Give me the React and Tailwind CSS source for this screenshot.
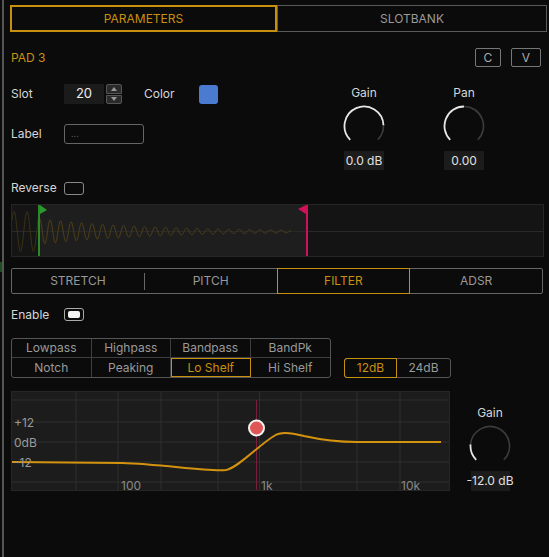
import React from "react";

function arcPath(cx, cy, r, a0, a1) {
  const p = (a) => {
    const t = (a * Math.PI) / 180;
    return `${(cx + r * Math.sin(t)).toFixed(2)} ${(cy - r * Math.cos(t)).toFixed(2)}`;
  };
  const large = a1 - a0 > 180 ? 1 : 0;
  return `M${p(a0)} A${r} ${r} 0 ${large} 1 ${p(a1)}`;
}

function Knob({ angle }) {
  return (
    <svg width="42" height="42" viewBox="0 0 42 42">
      <path d={arcPath(21, 21, 19.5, angle, 135)} fill="none" stroke="#3c3c3c" strokeWidth="1.6" />
      <path d={arcPath(21, 21, 19.5, -135, angle)} fill="none" stroke="#e6e6e6" strokeWidth="1.8" />
    </svg>
  );
}

function KnobColumn({ label, angle, value }) {
  return (
    <div className="flex flex-col items-center w-[42px]">
      <div className="text-[12px] leading-[14px] text-[#d6d6d6]">{label}</div>
      <div className="mt-[5px]">
        <Knob angle={angle} />
      </div>
      <div className="mt-[4px] h-[19px] w-[40px] bg-[#1c1c1c] flex items-center justify-center text-[12px] text-[#e0e0e0] whitespace-nowrap">
        {value}
      </div>
    </div>
  );
}

function wavePath(from, to, fn) {
  let d = "";
  for (let x = from; x <= to; x += 0.5) {
    d += `${x === from ? "M" : "L"}${x} ${fn(x).toFixed(2)} `;
  }
  return d;
}

function Waveform() {
  const pre = wavePath(0, 27, (x) => 26.5 - 20 * Math.sin((x / 13) * Math.PI * 2 + 0.6));
  const main = wavePath(27, 279, (x) => {
    const amp = 13 * Math.exp(-(x - 27) / 110);
    return 26.5 - amp * Math.sin(((x - 27) / 10.5) * Math.PI * 2 + 1.2);
  });
  return (
    <div className="relative w-[533px] h-[53px] border border-[#262626]">
      <svg width="531" height="51" viewBox="0 0 531 51" className="block">
        <rect x="0" y="0" width="27" height="51" fill="#151515" />
        <rect x="27" y="0" width="268" height="51" fill="#1e1e1e" />
        <rect x="295" y="0" width="236" height="51" fill="#141414" />
        <line x1="0" y1="26.5" x2="531" y2="26.5" stroke="#292929" strokeWidth="1" />
        <path d={pre} fill="none" stroke="#3a3116" strokeWidth="1" />
        <path d={main} fill="none" stroke="#4e4018" strokeWidth="1" />
        <line x1="27" y1="0" x2="27" y2="51" stroke="#2a8a2a" strokeWidth="2" />
        <polygon points="28,0 35,5 28,9" fill="#2a9a2a" />
        <line x1="295" y1="0" x2="295" y2="51" stroke="#d0115a" strokeWidth="2" />
        <polygon points="294,0 286,4 294,9" fill="#d0115a" />
      </svg>
    </div>
  );
}

function FilterGraph() {
  const vx = [64, 106, 149, 206, 247.5, 289, 345, 388];
  const hy = [8, 30, 50, 70, 90];
  return (
    <div className="relative w-[439px] h-[100px] bg-[#1c1c1c] border border-[#262626]">
      <svg width="437" height="98" viewBox="0 0 437 98" className="block">
        {vx.map((x) => (
          <line key={x} x1={x} y1="0" x2={x} y2="98" stroke="#2e2e2e" strokeWidth="1" />
        ))}
        {hy.map((y) => (
          <line key={y} x1="0" y1={y} x2="437" y2={y} stroke="#2e2e2e" strokeWidth="1" />
        ))}
        <line x1="244.5" y1="8" x2="244.5" y2="98" stroke="#7a1f3c" strokeWidth="1" />
        <path
          d="M0 70 L110 71 C150 72 195 80 214 78 C226 76 248 52 262 44 C268 40 276 40 292 44 C310 48 325 50 345 50 L429 50"
          fill="none"
          stroke="#d4930f"
          strokeWidth="2"
        />
        <circle cx="244.5" cy="36" r="7.5" fill="#e05555" stroke="#f2f2f2" strokeWidth="2" />
      </svg>
      <span className="absolute left-[2px] top-[22px] text-[12px] text-[#9a9a9a]">+12</span>
      <span className="absolute left-[2px] top-[42px] text-[12px] text-[#9a9a9a]">0dB</span>
      <span className="absolute left-[2px] top-[62px] text-[12px] text-[#9a9a9a]">-12</span>
      <span className="absolute left-[109px] top-[85px] text-[12px] text-[#8a8a8a]">100</span>
      <span className="absolute left-[249px] top-[85px] text-[12px] text-[#8a8a8a]">1k</span>
      <span className="absolute left-[389px] top-[85px] text-[12px] text-[#8a8a8a]">10k</span>
    </div>
  );
}

export default function App() {
  const types = ["Lowpass", "Highpass", "Bandpass", "BandPk", "Notch", "Peaking", "Lo Shelf", "Hi Shelf"];

  return (
    <div className="w-[549px] h-[557px] bg-[#0b0b0b] flex font-['Inter',sans-serif] overflow-hidden">
      <div className="w-[2px] flex flex-col">
        <div className="mt-[262px] h-[10px] bg-[#1d4f1d]" />
      </div>
      <div className="w-[2px] bg-[#555]" />
      <div className="flex-1 flex flex-col">
        {/* top tabs */}
        <div className="mt-[5px] ml-[6px] w-[537px] h-[27px] flex">
          <div className="w-[267px] border-2 border-[#c8900f] flex items-center justify-center text-[12px] text-[#c8900f]">
            PARAMETERS
          </div>
          <div className="flex-1 border border-[#5a5a5a] flex items-center justify-center text-[12px] text-[#9a9a9a]">
            SLOTBANK
          </div>
        </div>

        {/* pad header */}
        <div className="mt-[16px] h-[19px] pl-[7px] pr-[8px] flex items-center justify-between">
          <span className="text-[12px] text-[#c8900f]">PAD 3</span>
          <div className="flex gap-[10px]">
            <div className="w-[26px] h-[19px] border border-[#777] rounded-[2px] flex items-center justify-center text-[12px] text-[#aaa]">C</div>
            <div className="w-[30px] h-[19px] border border-[#777] rounded-[2px] flex items-center justify-center text-[12px] text-[#aaa]">V</div>
          </div>
        </div>

        {/* slot / label / knobs */}
        <div className="mt-[17px] pl-[7px] flex">
          <div className="w-[332px] flex flex-col">
            <div className="h-[20px] flex items-center">
              <span className="w-[53px] text-[12px] text-[#d6d6d6]">Slot</span>
              <div className="w-[40px] h-[20px] bg-[#1b1b1b] flex items-center justify-center text-[13px] text-[#eee]">20</div>
              <div className="ml-[2px] w-[16px] h-[20px] flex flex-col gap-px">
                <div className="flex-1 bg-[#2a2a2a] border border-[#555] rounded-t-[2px] flex items-center justify-center">
                  <svg width="6" height="4" viewBox="0 0 6 4"><polygon points="0,4 3,0 6,4" fill="#999" /></svg>
                </div>
                <div className="flex-1 bg-[#2a2a2a] border border-[#555] rounded-b-[2px] flex items-center justify-center">
                  <svg width="6" height="4" viewBox="0 0 6 4"><polygon points="0,0 6,0 3,4" fill="#999" /></svg>
                </div>
              </div>
              <span className="ml-[22px] w-[55px] text-[12px] text-[#d6d6d6]">Color</span>
              <div className="w-[19px] h-[19px] rounded-[3px] bg-[#4a7bd1]" />
            </div>
            <div className="mt-[20px] h-[20px] flex items-center">
              <span className="w-[53px] text-[12px] text-[#d6d6d6]">Label</span>
              <div className="w-[80px] h-[20px] border border-[#666] rounded-[3px] flex items-center pl-[6px] text-[9px] text-[#555]">...</div>
            </div>
            <div className="mt-[38px] h-[12px] flex items-center">
              <span className="w-[53px] text-[12px] text-[#d6d6d6]">Reverse</span>
              <div className="w-[20px] h-[13px] border border-[#888] rounded-[3px]" />
            </div>
          </div>
          <div className="mt-[2px] flex gap-[58px]">
            <KnobColumn label="Gain" angle={88} value="0.0 dB" />
            <KnobColumn label="Pan" angle={0} value="0.00" />
          </div>
        </div>

        {/* waveform */}
        <div className="mt-[10px] pl-[7px]">
          <Waveform />
        </div>

        {/* sub tabs */}
        <div className="mt-[11px] ml-[7px] w-[532px] h-[26px] flex border border-[#666] rounded-[2px]">
          <div className="flex-1 flex items-center justify-center text-[12px] text-[#999]">STRETCH</div>
          <div className="w-px h-[17px] self-center bg-[#666]" />
          <div className="flex-1 flex items-center justify-center text-[12px] text-[#999]">PITCH</div>
          <div className="flex-1 -my-px border border-[#c8900f] flex items-center justify-center text-[12px] text-[#c8900f]">FILTER</div>
          <div className="flex-1 flex items-center justify-center text-[12px] text-[#999]">ADSR</div>
        </div>

        {/* enable */}
        <div className="mt-[14px] pl-[7px] h-[13px] flex items-center">
          <span className="w-[53px] text-[12px] text-[#d6d6d6]">Enable</span>
          <div className="w-[20px] h-[13px] border border-[#aaa] rounded-[3px] flex items-center justify-center">
            <div className="w-[12px] h-[7px] bg-[#f2f2f2] rounded-[2px]" />
          </div>
        </div>

        {/* filter types */}
        <div className="mt-[17px] pl-[7px] flex items-end">
          <div className="w-[320px] h-[40px] border border-[#555] rounded-[3px] grid grid-cols-4 grid-rows-2">
            {types.map((t, i) => {
              const sel = t === "Lo Shelf";
              const cls = sel
                ? "border border-[#c8900f] text-[#c8900f]"
                : `${i % 4 !== 3 ? "border-r" : ""} ${i < 4 ? "border-b" : ""} border-[#3e3e3e] text-[#9a9a9a]`;
              return (
                <div key={t} className={`flex items-center justify-center text-[12px] ${cls}`}>
                  {t}
                </div>
              );
            })}
          </div>
          <div className="ml-[13px] w-[107px] h-[20px] flex border border-[#555] rounded-[3px]">
            <div className="w-[53px] -my-px -ml-px border border-[#c8900f] rounded-l-[3px] flex items-center justify-center text-[12px] text-[#c8900f]">12dB</div>
            <div className="flex-1 flex items-center justify-center text-[12px] text-[#9a9a9a]">24dB</div>
          </div>
        </div>

        {/* graph + gain */}
        <div className="mt-[13px] pl-[7px] flex">
          <FilterGraph />
          <div className="ml-[19px] mt-[15px] flex flex-col items-center w-[42px]">
            <div className="text-[12px] leading-[14px] text-[#d6d6d6]">Gain</div>
            <div className="mt-[5px]">
              <Knob angle={-85} />
            </div>
            <div className="mt-[4px] h-[20px] w-[39px] bg-[#1c1c1c] flex items-center justify-center text-[12px] text-[#e0e0e0] whitespace-nowrap">
              -12.0 dB
            </div>
          </div>
        </div>
      </div>
    </div>
  );
}
